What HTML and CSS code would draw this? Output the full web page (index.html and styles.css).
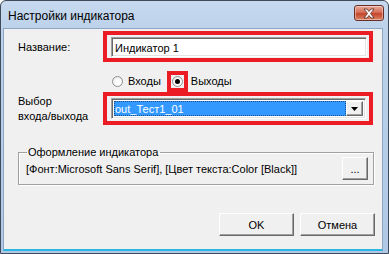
FILE: index.html
```html
<!DOCTYPE html>
<html lang="ru">
<head>
<meta charset="utf-8">
<link rel="stylesheet" href="styles.css">
</head>
<body>
<div class="window">
  <div class="titlebar">
    <span class="title">Настройки индикатора</span>
    <div class="close">
      <svg width="14" height="11" viewBox="0 0 14 11"><path d="M2 1 L5 1 L7 3.5 L9 1 L12 1 L8.5 5.5 L12 10 L9 10 L7 7.5 L5 10 L2 10 L5.5 5.5 Z" fill="#fff" stroke="#5a2a22" stroke-width="0.8"/></svg>
    </div>
  </div>
  <div class="client">
    <div class="row row-name">
      <label class="lbl">Название:</label>
      <div class="mark mark-wide">
        <div class="textbox">Индикатор 1</div>
      </div>
    </div>
    <div class="row row-radios">
      <div class="radio-item">
        <span class="radio"></span><span class="rtext">Входы</span>
      </div>
      <div class="mark mark-radio"><span class="radio checked"></span></div>
      <span class="rtext">Выходы</span>
    </div>
    <div class="row row-combo">
      <label class="lbl lbl-two">Выбор<br>входа/выхода</label>
      <div class="mark mark-wide mark-combo">
        <div class="combo">
          <div class="combo-value"><span class="sel">out_Тест1_01</span></div>
          <div class="combo-btn">
            <svg width="7" height="4" viewBox="0 0 7 4"><path d="M0 0 H7 L3.5 4 Z" fill="#000"/></svg>
          </div>
        </div>
      </div>
    </div>
    <fieldset class="group">
      <legend>Оформление индикатора</legend>
      <div class="group-row">
        <span class="gtext">[Фонт:Microsoft Sans Serif], [Цвет текста:Color [Black]]</span>
        <button class="btn btn-dots">...</button>
      </div>
    </fieldset>
    <div class="buttons">
      <button class="btn btn-main">OK</button>
      <button class="btn btn-main">Отмена</button>
    </div>
  </div>
</div>
</body>
</html>
```
FILE: styles.css
```css
html, body {
  margin: 0;
  padding: 0;
  background: #fff;
}
.window {
  width: 389px;
  height: 254px;
  box-sizing: border-box;
  border: 1px solid #3f4b5a;
  border-radius: 6px 6px 0 0;
  background: linear-gradient(#c6d9ef, #bcd2ea 30px, #b0c8e5);
  display: flex;
  flex-direction: column;
  font-family: "Liberation Sans", Arial, sans-serif;
  font-size: 11px;
  color: #000;
}
.titlebar {
  height: 27px;
  flex: none;
  display: flex;
  align-items: flex-start;
  justify-content: space-between;
  padding: 0 4px 0 7px;
}
.title {
  font-family: "Liberation Sans", Arial, sans-serif;
  font-size: 12px;
  color: #000;
  margin-top: 8px;
}
.close {
  width: 30px;
  height: 16px;
  margin-top: 4px;
  box-sizing: border-box;
  border: 1px solid #6b2e24;
  border-radius: 3px;
  background: linear-gradient(#e8ab9c, #d66e58 45%, #c4452b 55%, #d98467);
  display: flex;
  align-items: center;
  justify-content: center;
  box-shadow: inset 0 0 0 1px rgba(255,255,255,0.4);
}
.client {
  flex: 1;
  margin: 0 5px 2px 2px;
  background: #f0f0f0;
  border: 1px solid #8ea6c3;
  border-bottom: 2px solid #29b6e0;
  display: flex;
  flex-direction: column;
}
.row {
  display: flex;
  align-items: center;
}
.row-name {
  margin-top: 2px;
  padding-left: 14px;
}
.lbl {
  width: 85px;
  flex: none;
}
.lbl-two {
  line-height: 15px;
}
.mark {
  border: 4px solid #ec1c24;
  box-sizing: border-box;
}
.mark-wide {
  width: 270px;
  padding: 2px 2px 1px 4px;
}
.textbox {
  height: 20px;
  box-sizing: border-box;
  background: #fff;
  border-top: 1px solid #a0a0a0;
  border-left: 1px solid #a0a0a0;
  border-right: 1px solid #fff;
  border-bottom: 1px solid #fff;
  box-shadow: inset 1px 1px 0 #696969, inset -1px -1px 0 #e3e3e3;
  padding: 3px 3px 0 3px;
  line-height: 14px;
  white-space: nowrap;
}
.row-radios {
  margin-top: 8px;
  padding-left: 108px;
  height: 22px;
}
.radio-item {
  display: flex;
  align-items: center;
}
.radio {
  width: 11px;
  height: 11px;
  border-radius: 50%;
  box-sizing: border-box;
  border: 1px solid #8e8f8f;
  background: radial-gradient(circle at 60% 60%, #fff 30%, #e0e0e0 100%);
  display: inline-flex;
  align-items: center;
  justify-content: center;
}
.radio.checked::after {
  content: "";
  width: 5px;
  height: 5px;
  border-radius: 50%;
  background: #000;
}
.rtext {
  margin-left: 5px;
}
.mark-radio {
  width: 21px;
  height: 21px;
  margin-left: 6px;
  display: flex;
  align-items: center;
  justify-content: center;
}
.mark-radio + .rtext {
  margin-left: 3px;
}
.row-combo {
  padding-left: 14px;
}
.mark-combo {
  padding: 2px 3px 2px 4px;
}
.combo {
  height: 21px;
  box-sizing: border-box;
  display: flex;
  background: #fff;
  border-top: 1px solid #a0a0a0;
  border-left: 1px solid #a0a0a0;
  border-right: 1px solid #fff;
  border-bottom: 1px solid #fff;
  box-shadow: inset 1px 1px 0 #696969, inset -1px -1px 0 #e3e3e3;
  padding: 2px;
}
.combo-value {
  flex: 1;
  display: flex;
}
.sel {
  flex: 1;
  background: #3399ff;
  color: #fff;
  padding: 1px 1px 0 1px;
  line-height: 14px;
  outline: 1px dotted #1a4f8a;
  outline-offset: -1px;
}
.combo-btn {
  width: 17px;
  flex: none;
  box-sizing: border-box;
  background: #f0f0f0;
  border-top: 1px solid #fff;
  border-left: 1px solid #fff;
  border-right: 1px solid #696969;
  border-bottom: 1px solid #696969;
  box-shadow: inset -1px -1px 0 #a0a0a0;
  display: flex;
  align-items: center;
  justify-content: center;
}
.group {
  margin: 21px 0 0 14px;
  width: 356px;
  height: 39px;
  box-sizing: border-box;
  border: 1px solid #a0a0a0;
  box-shadow: inset 1px 1px 0 #fff, 1px 1px 0 #fff;
  padding: 0 5px 0 7px;
  min-inline-size: 0;
}
.group legend {
  padding: 0 2px 0 1px;
  margin-left: 1px;
  line-height: 13px;
}
.group-row {
  display: flex;
  align-items: center;
  justify-content: space-between;
  margin-top: -2px;
}
.btn {
  font-family: "Liberation Sans", Arial, sans-serif;
  font-size: 11px;
  color: #000;
  background: #f0f0f0;
  box-sizing: border-box;
  border-top: 1px solid #fff;
  border-left: 1px solid #fff;
  border-right: 1px solid #696969;
  border-bottom: 1px solid #696969;
  box-shadow: inset -1px -1px 0 #a0a0a0;
  padding: 0;
  margin: 0;
}
.btn-dots {
  width: 26px;
  height: 23px;
  line-height: 14px;
}
.buttons {
  margin-top: auto;
  margin-bottom: 13px;
  display: flex;
  justify-content: flex-end;
  gap: 6px;
  padding-right: 7px;
}
.btn-main {
  width: 75px;
  height: 23px;
}
```
